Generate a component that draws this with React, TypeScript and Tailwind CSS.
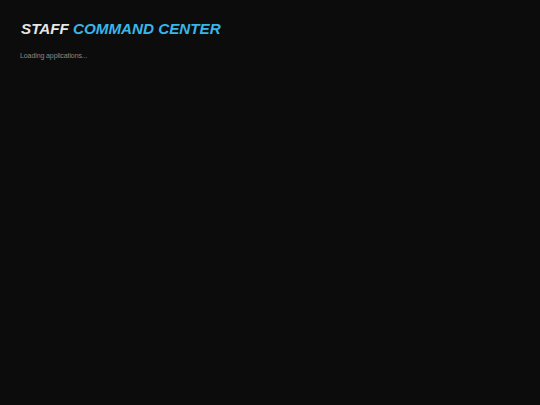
export default function App() {
  return (
    <div className="min-h-[405px] w-full bg-[#0c0c0c] px-5 pt-[20px]" style={{ fontFamily: '"Liberation Sans", Arial, sans-serif' }}>
      <h1 className="pl-px text-[15.2px] font-bold italic leading-[18px]">
        <span className="text-[#e6e6e6]">STAFF </span>
        <span className="text-[#38b6e8]">COMMAND CENTER</span>
      </h1>
      <p className="mt-[13px] text-[7px] leading-[9px] tracking-[-0.1px] text-[#8a8a8a]">Loading applications...</p>
    </div>
  );
}
